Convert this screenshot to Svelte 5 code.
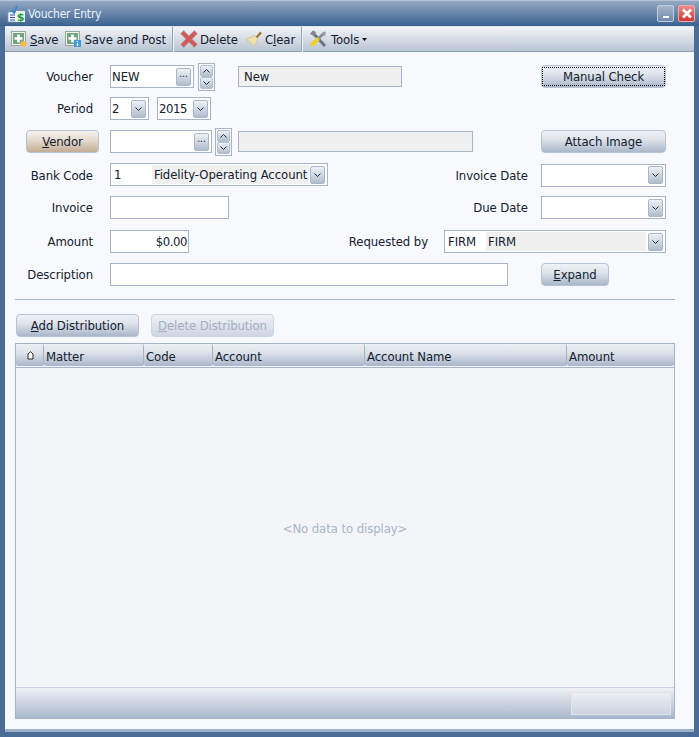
<script>
  const columns = [
    { label: 'Matter', width: 100 },
    { label: 'Code', width: 69 },
    { label: 'Account', width: 152 },
    { label: 'Account Name', width: 202 },
    { label: 'Amount', width: 107 }
  ];
</script>

{#snippet chevron()}
  <span class="drop">
    <svg width="9" height="6" viewBox="0 0 9 6"><path d="M1.5 1.5 4.5 4.5 7.5 1.5" fill="none" stroke="#1d2a3c" stroke-width="1" /></svg>
  </span>
{/snippet}

{#snippet spinner()}
  <span class="spin">
    <span class="spin-btn"><svg width="9" height="6" viewBox="0 0 9 6"><path d="M1.5 4.5 4.5 1.5 7.5 4.5" fill="none" stroke="#1d2a3c" stroke-width="1" /></svg></span>
    <span class="spin-btn"><svg width="9" height="6" viewBox="0 0 9 6"><path d="M1.5 1.5 4.5 4.5 7.5 1.5" fill="none" stroke="#1d2a3c" stroke-width="1" /></svg></span>
  </span>
{/snippet}

{#snippet dots()}
  <span class="drop dots">...</span>
{/snippet}

{#snippet saveBase()}
  <rect x="1.5" y="1.5" width="14" height="14" fill="#f1f3ee" stroke="#9aa59c" />
  <rect x="3" y="3" width="11" height="11" fill="#6fa67e" />
  <path d="M8.500 4.500v8M4.500 8.500h8" stroke="#fff" stroke-width="2.600" />
{/snippet}

<div class="window">
  <header class="titlebar">
    <svg class="app-icon" width="18" height="18" viewBox="0 0 18 18">
      <rect x="1" y="7" width="9" height="10" fill="#f4f7fb" stroke="#7f94b2" stroke-width="0.8" />
      <path d="M3 10h5M3 12.500h5M3 15h5" stroke="#2f55b8" stroke-width="1.200" />
      <path d="M5 5 7 8 10 1" fill="none" stroke="#3a8ad0" stroke-width="2" />
      <rect x="9" y="6" width="9" height="11" fill="#e8f5e6" />
      <text x="13.500" y="16" text-anchor="middle" class="dollar">$</text>
    </svg>
    <span class="title">Voucher Entry</span>
    <div class="win-buttons">
      <span class="win-btn min"><i></i></span>
      <span class="win-btn close">
        <svg width="12" height="11" viewBox="0 0 12 11"><path d="M2 1.500 10 9.500M10 1.500 2 9.500" stroke="#fff" stroke-width="2.600" /></svg>
      </span>
    </div>
  </header>

  <main class="body">
    <nav class="toolbar">
      <span class="tool">
        <svg width="18" height="18" viewBox="0 0 18 18">
          {@render saveBase()}
          <circle cx="13.500" cy="14" r="3" fill="#f7bd4a" />
        </svg>
        <span><u>S</u>ave</span>
      </span>
      <span class="tool">
        <svg width="18" height="18" viewBox="0 0 18 18">
          {@render saveBase()}
          <rect x="10" y="10" width="7" height="7" fill="#3f9bd8" />
          <path d="M13.500 11v1M13.500 13v3" stroke="#fff" stroke-width="1.400" />
        </svg>
        <span>Save and Post</span>
      </span>
      <span class="sep"></span>
      <span class="tool">
        <svg width="18" height="18" viewBox="0 0 18 18">
          <path d="M2 2 16 16M16 2 2 16" stroke="#b3808a" stroke-width="4.600" />
          <path d="M2.500 2.500 15.500 15.500M15.500 2.500 2.500 15.500" stroke="#dc5552" stroke-width="3" />
        </svg>
        <span>Delete</span>
      </span>
      <span class="tool brush">
        <svg width="18" height="18" viewBox="0 0 18 18">
          <path d="M10.500 7 15 1.500 17 3.200 12 8.500Z" fill="#a5763e" />
          <path d="M9.500 5.500 13 9 9.500 16 1 9.500Z" fill="#efe0ac" stroke="#c9b47c" stroke-width="0.600" />
        </svg>
        <span>C<u>l</u>ear</span>
      </span>
      <span class="sep"></span>
      <span class="tool tools">
        <svg width="20" height="20" viewBox="0 0 20 20">
          <path d="M4 3 17 17" stroke="#6b7480" stroke-width="3" />
          <path d="M2 5 5 1.500 8 3 6 7Z" fill="#7d8691" />
          <path d="M18 2.500 14.500 3 14 6 17 7Z" fill="#98a0aa" />
          <path d="M15 5 10.500 9.500" stroke="#8a929c" stroke-width="3" />
          <path d="M10.500 9.500 3.500 16.500" stroke="#e8d32e" stroke-width="4" />
        </svg>
        <span>Tools</span>
        <svg width="5" height="3" viewBox="0 0 5 3"><path d="M0 0h5L2.500 3Z" fill="#111" /></svg>
      </span>
    </nav>

    <form class="form">
      <div class="row" style="margin-top:13px">
        <span class="lead">Voucher</span>
        <span class="box w84 text">NEW{@render dots()}</span>
        <span class="after-spin">{@render spinner()}</span>
        <span class="box ro w164 gap23">New</span>
        <button type="button" class="btn right focused w125" tabindex="-1"><span>Manual Check</span></button>
      </div>

      <div class="row" style="margin-top:9px">
        <span class="lead">Period</span>
        <span class="box w39 text">2{@render chevron()}</span>
        <span class="box w54 text gap8 digits">2015{@render chevron()}</span>
      </div>

      <div class="row" style="margin-top:10px">
        <span class="lead vendor"><button type="button" class="btn tan"><u>V</u>endor</button></span>
        <span class="box w102 text">{@render dots()}</span>
        <span class="after-spin small">{@render spinner()}</span>
        <span class="box ro w235 gap6"></span>
        <button type="button" class="btn right w125">Attach Image</button>
      </div>

      <div class="row" style="margin-top:10px">
        <span class="lead low">Bank Code</span>
        <span class="box w218 text pair"><span class="code w40">1</span><span class="name">Fidelity-Operating Account</span>{@render chevron()}</span>
        <span class="right-group nudge"><span>Invoice Date</span><span class="box w125 text">{@render chevron()}</span></span>
      </div>

      <div class="row" style="margin-top:10px">
        <span class="lead">Invoice</span>
        <span class="box w119"></span>
        <span class="right-group"><span>Due Date</span><span class="box w125 text">{@render chevron()}</span></span>
      </div>

      <div class="row" style="margin-top:11px">
        <span class="lead">Amount</span>
        <span class="box w79 num digits">$0.00</span>
        <span class="right-group wide">
          <span>Requested by</span>
          <span class="box w222 text pair"><span class="code w40b">FIRM</span><span class="name grow">FIRM</span>{@render chevron()}</span>
        </span>
      </div>

      <div class="row" style="margin-top:10px">
        <span class="lead">Description</span>
        <span class="box w398"></span>
        <button type="button" class="btn right w68"><u>E</u>xpand</button>
      </div>
    </form>

    <hr class="rule" />

    <div class="actions">
      <button type="button" class="btn w123"><u>A</u>dd Distribution</button>
      <button type="button" class="btn w123 disabled"><u>D</u>elete Distribution</button>
    </div>

    <section class="grid">
      <div class="grid-head">
        <span class="col corner">
          <svg width="7" height="9" viewBox="0 0 7 9"><path d="M3.500 .8 6 3v5H1V3Z" fill="#fff" stroke="#222" /></svg>
        </span>
        {#each columns as col}
          <span class="col" style="width:{col.width}px">{col.label}</span>
        {/each}
      </div>
      <div class="grid-body">&lt;No data to display&gt;</div>
      <div class="grid-foot"><span class="foot-cell"></span></div>
    </section>
  </main>
</div>

<style>
  :global(body) {
    margin: 0;
    background: #3d6390;
  }

  .window {
    width: 699px;
    height: 737px;
    box-sizing: border-box;
    display: flex;
    flex-direction: column;
    padding: 0 5px 5px;
    background: #4a6d98;
    border-top: 1px solid #b5c3d6;
    font-family: "DejaVu Sans Condensed", "DejaVu Sans", sans-serif;
    font-size: 13px;
    letter-spacing: -0.08px;
    color: #14202e;
    overflow: hidden;
  }

  .titlebar {
    height: 25px;
    margin: 0 -5px;
    padding: 0 4px 0 7px;
    flex: none;
    display: flex;
    align-items: center;
    gap: 3px;
    background: linear-gradient(#94a8c3, #3a628f);
    color: #eaf1f8;
    font-size: 12px;
    letter-spacing: -0.2px;
  }

  .dollar {
    font: bold 11px "DejaVu Sans", sans-serif;
    fill: #1d9a48;
  }

  .win-buttons {
    margin-left: auto;
    display: flex;
    gap: 4px;
  }

  .win-btn {
    width: 17px;
    height: 17px;
    box-sizing: border-box;
    border-radius: 2px;
    border: 1px solid #c2cede;
    display: flex;
    align-items: center;
    justify-content: center;
  }

  .min {
    background: linear-gradient(#a7b6cb, #6e88ab);
    align-items: flex-end;
  }

  .min i {
    width: 6px;
    height: 2px;
    margin-bottom: 3px;
    background: #fff;
  }

  .close {
    background: linear-gradient(#ef8a86, #cf3432);
    border-color: #e4b0ae;
  }

  .body {
    flex: 1;
    display: flex;
    flex-direction: column;
    background: #f8f9fc;
    border-bottom: 3px solid #a0b0c8;
    min-height: 0;
  }

  .toolbar {
    height: 26px;
    flex: none;
    box-sizing: border-box;
    display: flex;
    align-items: center;
    background: linear-gradient(#f2f4f7, #b9c4d4);
    border-top: 1px solid #dfe5ed;
    border-bottom: 1px solid #8da0ba;
    padding-left: 5px;
    gap: 6px;
  }

  .tool {
    display: inline-flex;
    align-items: center;
    gap: 2px;
  }

  .tool.brush {
    margin-left: 1px;
  }

  .tool.tools {
    gap: 3px;
    margin-left: -1px;
  }

  .sep {
    width: 1px;
    height: 25px;
    background: #eef2f6;
    border-left: 1px solid #95a5bc;
  }

  .form {
    flex: none;
    padding-right: 28px;
  }

  .row {
    height: 23px;
    display: flex;
    align-items: center;
  }

  .lead {
    width: 105px;
    flex: none;
    box-sizing: border-box;
    padding-right: 17px;
    text-align: right;
  }

  .lead.low {
    padding-top: 2px;
  }

  .nudge {
    padding-top: 1px;
  }

  .lead.vendor {
    padding-left: 21px;
    padding-right: 11px;
  }

  .box {
    height: 23px;
    box-sizing: border-box;
    flex: none;
    display: flex;
    align-items: center;
    padding: 0 2px 0 1px;
    background: #fff;
    border: 1px solid #a5b4c9;
  }

  .box.text > :global(.drop) {
    margin-left: auto;
  }

  .ro {
    height: 21px;
    background: #f0f0f0;
    padding: 0 5px;
  }

  .num {
    justify-content: flex-end;
    padding-right: 1px;
  }

  .digits {
    letter-spacing: -0.45px;
  }

  .pair {
    padding: 0 2px 0 3px;
  }

  .code.w40 {
    width: 38px;
    flex: none;
  }

  .code.w40b {
    width: 38px;
    flex: none;
  }

  .name {
    background: #f0f0f0;
    height: 19px;
    line-height: 19px;
    padding: 0 2px;
    white-space: nowrap;
  }

  .name.grow {
    flex: 1;
    margin-right: 2px;
  }

  .w39 { width: 39px; }
  .w54 { width: 54px; }
  .w68 { width: 68px; }
  .w79 { width: 79px; }
  .w84 { width: 84px; }
  .w102 { width: 102px; }
  .w119 { width: 119px; }
  .w123 { width: 123px; }
  .w125 { width: 125px; }
  .w164 { width: 164px; }
  .w218 { width: 218px; }
  .w222 { width: 222px; }
  .w235 { width: 235px; }
  .w398 { width: 398px; }

  .gap8 { margin-left: 8px; }
  .gap6 { margin-left: 6px; }
  .gap23 { margin-left: 23px; }

  .drop {
    width: 15px;
    height: 18px;
    box-sizing: border-box;
    flex: none;
    display: flex;
    align-items: center;
    justify-content: center;
    border: 1px solid #a9b7ca;
    border-radius: 2px;
    background: linear-gradient(#eef1f5, #b0bdce);
  }

  .dots {
    font-size: 10px;
    line-height: 1;
    padding-bottom: 5px;
  }

  .after-spin {
    margin-left: 4px;
    display: flex;
  }

  .after-spin.small {
    margin-left: 3px;
  }

  .spin {
    width: 17px;
    height: 28px;
    box-sizing: border-box;
    display: flex;
    flex-direction: column;
    justify-content: space-between;
    padding: 1px;
    background: #f8f9fc;
    border: 1px solid #a5b4c9;
  }

  .spin-btn {
    height: 11px;
    border: 1px solid #b3c0d2;
    border-radius: 2px;
    background: linear-gradient(#eef1f5, #b0bdce);
    display: flex;
    align-items: center;
    justify-content: center;
  }

  .btn {
    height: 23px;
    box-sizing: border-box;
    flex: none;
    padding: 0;
    font: inherit;
    letter-spacing: inherit;
    color: inherit;
    border: 1px solid #b6c3d4;
    border-radius: 4px;
    background: linear-gradient(#eff2f6 0, #dfe4eb 40%, #aab7ca 100%);
    outline: none;
  }

  .btn.tan {
    width: 73px;
    background: linear-gradient(#f6f3ee 0, #e6ddd2 40%, #c4ad94 100%);
  }

  .btn.right {
    margin-left: auto;
  }

  .btn.w68.right {
    margin-right: 57px;
  }

  .focused {
    padding: 1px;
  }

  .focused span {
    display: block;
    line-height: 17px;
    outline: 1px dotted #000;
  }

  .right-group {
    margin-left: auto;
    display: flex;
    align-items: center;
    gap: 13px;
  }

  .right-group.wide {
    gap: 16px;
  }

  .rule {
    flex: none;
    width: 660px;
    height: 1px;
    margin: 13px 0 0 10px;
    border: 0;
    background: #a5b4c9;
  }

  .actions {
    flex: none;
    display: flex;
    gap: 12px;
    margin: 14px 0 0 11px;
  }

  .disabled {
    color: #a3afc0;
    border-color: #cdd6e2;
    background: linear-gradient(#f1f3f7, #cdd5e1);
  }

  .grid {
    flex: none;
    width: 660px;
    height: 376px;
    box-sizing: border-box;
    margin: 6px 0 0 10px;
    display: flex;
    flex-direction: column;
    background: #f3f5f8;
    border: 1px solid #a5b4c9;
  }

  .grid-head {
    height: 23px;
    flex: none;
    display: flex;
    border-bottom: 1px solid #a5b4c9;
    background: #f3f5f8;
  }

  .col {
    box-sizing: border-box;
    height: 22px;
    line-height: 25px;
    padding-left: 2px;
    border-radius: 2px;
    border-right: 1px solid #a5b4c9;
    background: linear-gradient(#eceff4 0, #dde2ea 40%, #a9b6ca 100%);
    overflow: hidden;
  }

  .col:last-child {
    border-right: 0;
  }

  .corner {
    width: 28px;
    display: flex;
    align-items: center;
    justify-content: center;
  }

  .grid-body {
    flex: 1;
    display: flex;
    align-items: center;
    justify-content: center;
    padding-top: 2px;
    color: #a8b6c8;
  }

  .grid-foot {
    height: 30px;
    flex: none;
    display: flex;
    justify-content: flex-end;
    align-items: center;
    padding-right: 3px;
    border-top: 1px solid #c9d3e0;
    background: linear-gradient(#eef0f4, #a9b8cc);
  }

  .foot-cell {
    width: 100px;
    height: 23px;
    background: linear-gradient(#eceef3, #ccd3de);
    border: 1px solid #dfe4eb;
    box-sizing: border-box;
  }
</style>
